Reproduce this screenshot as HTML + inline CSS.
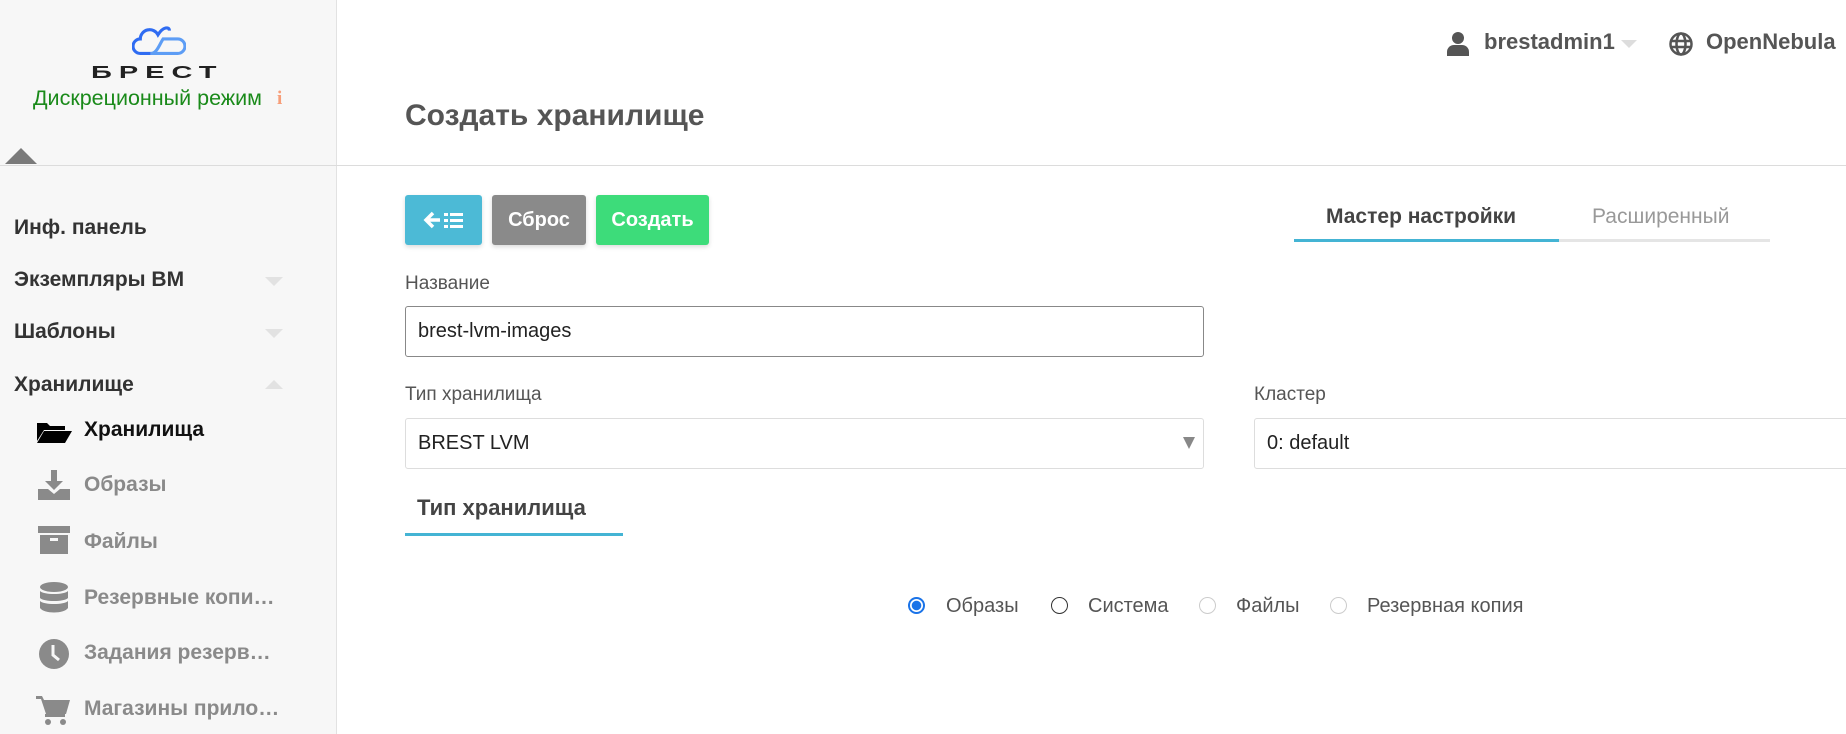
<!DOCTYPE html>
<html><head><meta charset="utf-8"><style>
*{box-sizing:border-box;margin:0;padding:0}
body{width:1846px;height:734px;overflow:hidden;background:#fff;font-family:"Liberation Sans","DejaVu Sans",sans-serif;position:relative;color:#333}
.abs{position:absolute;white-space:nowrap}
#side{position:absolute;left:0;top:0;width:337px;height:734px;background:#f7f7f7;border-right:1px solid #e2e2e2}
.hl{position:absolute;left:0;top:165px;width:1846px;height:1px;background:#dcdcdc}
.m{font-size:21px;font-weight:bold;color:#333;left:14px}
.s{font-size:21px;font-weight:bold;color:#8a8a8a;left:84px}
.car{position:absolute;left:265px;width:0;height:0;border-left:9px solid transparent;border-right:9px solid transparent}
.btn{position:absolute;top:195px;height:50px;border-radius:3px;color:#fff;font-weight:bold;font-size:20px;display:flex;align-items:center;justify-content:center;box-shadow:0 2px 5px rgba(0,0,0,.15)}
.lbl{font-size:19px;color:#555}
.inp{position:absolute;border:1px solid #ddd;border-radius:3px;font-size:20px;color:#222;padding-left:12px;display:flex;align-items:center}
.rad{position:absolute;top:597px;width:17px;height:17px;border-radius:50%;border:1.5px solid #333}
.rl{font-size:20px;color:#555;top:595px}
</style></head><body>
<div id="side"></div>
<div class="hl"></div>
<svg class="abs" style="left:132px;top:24px" width="54" height="34" viewBox="0 0 52 32"><path d="M18 28 H8 a7 7 0 0 1 0-14 a9 9 0 0 1 17-4 C30 2 36 2 36 6" fill="none" stroke="#2f6cf2" stroke-width="3"/><path d="M18 28 C24 28 26 20 30 14 H44 a7 7 0 0 1 0 14 H18" fill="none" stroke="#5d9df5" stroke-width="3"/></svg>
<div class="abs" style="left:91px;top:56px;font-size:29px;letter-spacing:7px;color:#222;font-weight:bold;transform:scaleY(.62);transform-origin:left center">БРЕСТ</div>
<div class="abs" style="left:33px;top:86px;font-size:21.5px;color:#1a8a1a">Дискреционный режим</div>
<div class="abs" style="left:277px;top:88px;font-size:19px;font-weight:bold;color:#f79e79;font-family:'Liberation Serif',serif">i</div>
<div class="abs" style="left:5px;top:148px;width:0;height:0;border-left:16px solid transparent;border-right:16px solid transparent;border-bottom:16px solid #7a7a7a"></div>

<div class="abs m" style="top:216px">Инф. панель</div>
<div class="abs m" style="top:268px">Экземпляры ВМ</div><div class="car" style="top:277px;border-top:9px solid #e2e2e2"></div>
<div class="abs m" style="top:320px">Шаблоны</div><div class="car" style="top:329px;border-top:9px solid #e2e2e2"></div>
<div class="abs m" style="top:373px">Хранилище</div><div class="car" style="top:380px;border-bottom:9px solid #e2e2e2"></div>

<svg class="abs" style="left:36px;top:421px" width="36" height="22" viewBox="0 0 36 22"><path d="M1 2h10l3 3h15v4H8L1 20z" fill="#000"/><path d="M8 10h28l-7 12H1z" fill="#000"/></svg>
<div class="abs s" style="top:418px;color:#111">Хранилища</div>
<svg class="abs" style="left:38px;top:470px" width="32" height="30" viewBox="0 0 32 30"><path d="M13 0h6v11h6l-9 9-9-9h6z" fill="#8a8a8a"/><path d="M0 19h10l6 5 6-5h10v11H0z" fill="#8a8a8a"/></svg>
<div class="abs s" style="top:473px">Образы</div>
<svg class="abs" style="left:38px;top:526px" width="32" height="28" viewBox="0 0 32 28"><rect x="0" y="0" width="32" height="7" fill="#8a8a8a"/><rect x="2" y="9" width="28" height="19" fill="#8a8a8a"/><rect x="12" y="12" width="8" height="3" fill="#f7f7f7"/></svg>
<div class="abs s" style="top:530px">Файлы</div>
<svg class="abs" style="left:40px;top:582px" width="28" height="32" viewBox="0 0 28 32"><ellipse cx="14" cy="5" rx="14" ry="5" fill="#8a8a8a"/><path d="M0 9c4 4 24 4 28 0v7c-4 4-24 4-28 0z" fill="#8a8a8a"/><path d="M0 19c4 4 24 4 28 0v7c-4 6-24 6-28 0z" fill="#8a8a8a"/></svg>
<div class="abs s" style="top:586px">Резервные копи…</div>
<svg class="abs" style="left:38px;top:638px" width="32" height="32" viewBox="0 0 32 32"><circle cx="16" cy="16" r="15" fill="#8a8a8a"/><path d="M15 7v10l6 5" stroke="#f7f7f7" stroke-width="3" fill="none"/></svg>
<div class="abs s" style="top:641px">Задания резерв…</div>
<svg class="abs" style="left:36px;top:694px" width="36" height="32" viewBox="0 0 36 32"><path d="M0 2h6l2 4h26l-4 14H10L5 5H0z" fill="#8a8a8a"/><rect x="9" y="20" width="20" height="3" fill="#8a8a8a"/><circle cx="12" cy="28" r="3" fill="#8a8a8a"/><circle cx="27" cy="28" r="3" fill="#8a8a8a"/></svg>
<div class="abs s" style="top:697px">Магазины прило…</div>

<svg class="abs" style="left:1447px;top:32px" width="22" height="24" viewBox="0 0 22 24"><circle cx="11" cy="6" r="6" fill="#555"/><path d="M0 24v-4a7 7 0 0 1 7-7h8a7 7 0 0 1 7 7v4z" fill="#555"/></svg>
<div class="abs" style="left:1484px;top:29px;font-size:22px;font-weight:bold;color:#555">brestadmin1</div>
<div class="abs" style="left:1621px;top:40px;border-left:8px solid transparent;border-right:8px solid transparent;border-top:8px solid #ddd"></div>
<svg class="abs" style="left:1669px;top:32px" width="24" height="24" viewBox="0 0 24 24"><circle cx="12" cy="12" r="10.5" fill="none" stroke="#555" stroke-width="2.5"/><ellipse cx="12" cy="12" rx="4.5" ry="10.5" fill="none" stroke="#555" stroke-width="2.5"/><path d="M2 9h20M2 15h20" stroke="#555" stroke-width="2.5"/></svg>
<div class="abs" style="left:1706px;top:29px;font-size:22px;font-weight:bold;color:#555">OpenNebula</div>

<div class="abs" style="left:405px;top:99px;font-size:30px;font-weight:bold;color:#555">Создать хранилище</div>

<div class="btn" style="left:405px;width:77px;background:#4cbad6"><svg width="44" height="20" viewBox="0 0 44 20"><path d="M11 3L4 10l7 7M4 10h14" stroke="#fff" stroke-width="3.5" fill="none"/><rect x="22" y="3" width="4" height="3" fill="#fff"/><rect x="22" y="9" width="4" height="3" fill="#fff"/><rect x="22" y="15" width="4" height="3" fill="#fff"/><rect x="28" y="3" width="13" height="3" fill="#fff"/><rect x="28" y="9" width="13" height="3" fill="#fff"/><rect x="28" y="15" width="13" height="3" fill="#fff"/></svg></div>
<div class="btn" style="left:492px;width:94px;background:#8a8a8a">Сброс</div>
<div class="btn" style="left:596px;width:113px;background:#3ddc7a">Создать</div>

<div class="abs" style="left:1326px;top:205px;font-size:21px;font-weight:bold;color:#444">Мастер настройки</div>
<div class="abs" style="left:1592px;top:205px;font-size:21px;color:#999">Расширенный</div>
<div class="abs" style="left:1294px;top:239px;width:476px;height:3px;background:#e5e5e5"></div>
<div class="abs" style="left:1294px;top:239px;width:265px;height:3px;background:#44b4d4"></div>

<div class="abs lbl" style="left:405px;top:273px">Название</div>
<div class="inp" style="left:405px;top:306px;width:799px;height:51px;border-color:#888">brest-lvm-images</div>
<div class="abs lbl" style="left:405px;top:384px">Тип хранилища</div>
<div class="inp" style="left:405px;top:418px;width:799px;height:51px">BREST LVM</div>
<div class="abs" style="left:1183px;top:437px;border-left:6px solid transparent;border-right:6px solid transparent;border-top:12px solid #888"></div>
<div class="abs lbl" style="left:1254px;top:384px">Кластер</div>
<div class="inp" style="left:1254px;top:418px;width:620px;height:51px">0: default</div>

<div class="abs" style="left:417px;top:495px;font-size:22px;font-weight:bold;color:#444">Тип хранилища</div>
<div class="abs" style="left:405px;top:533px;width:218px;height:3px;background:#44b4d4"></div>

<div class="rad" style="left:908px;border:2px solid #1a73e8;background:radial-gradient(circle,#1a73e8 0 4.5px,#fff 5px)"></div>
<div class="abs rl" style="left:946px">Образы</div>
<div class="rad" style="left:1051px"></div>
<div class="abs rl" style="left:1088px">Система</div>
<div class="rad" style="left:1199px;border-color:#ccc"></div>
<div class="abs rl" style="left:1236px">Файлы</div>
<div class="rad" style="left:1330px;border-color:#ccc"></div>
<div class="abs rl" style="left:1367px">Резервная копия</div>
</body></html>
